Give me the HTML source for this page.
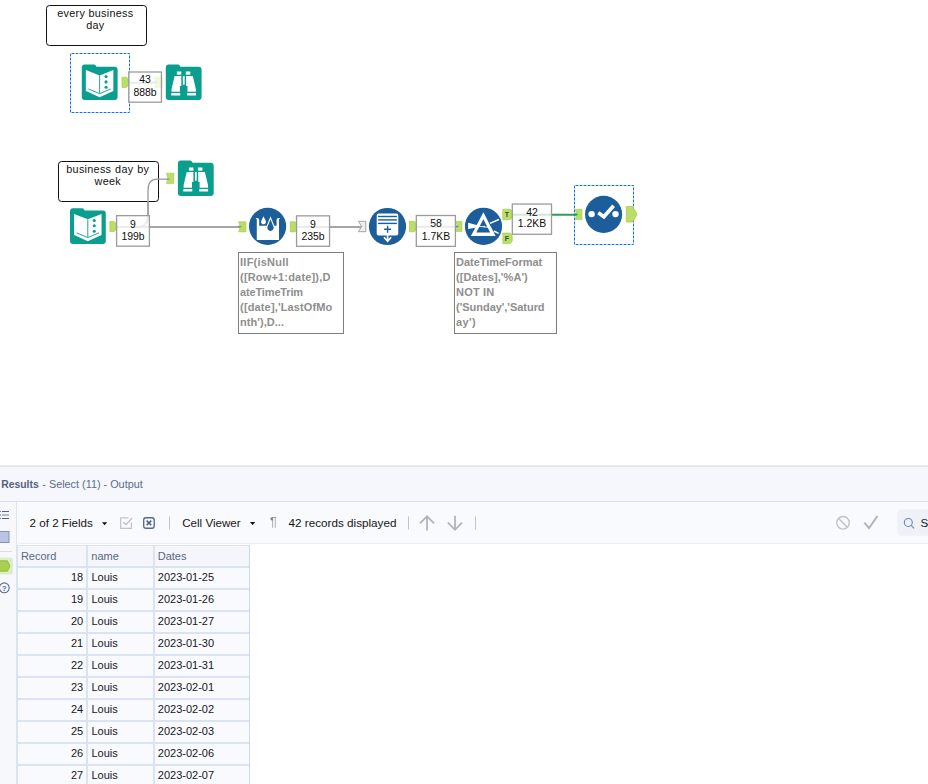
<!DOCTYPE html>
<html>
<head>
<meta charset="utf-8">
<title>Alteryx Designer</title>
<style>
html,body{margin:0;padding:0;}
body{width:928px;height:784px;overflow:hidden;background:#fff;position:relative;font-family:"Liberation Sans",sans-serif;color:#111;}
.abs{position:absolute;}
.comment{position:absolute;box-sizing:border-box;border:1px solid #111;border-radius:3.5px;background:#fff;text-align:center;font-size:10.8px;letter-spacing:0.3px;line-height:12.6px;color:#111;padding:0.9px 2.4px 0 0;white-space:nowrap;}
.lt{position:absolute;display:block;width:60px;text-align:center;font-size:11.5px;line-height:12px;color:#0d0d0d;white-space:nowrap;transform:scaleX(0.905);transform-origin:50% 50%;}
.anno{position:absolute;box-sizing:border-box;border:1px solid #7e7e7e;background:#fff;font-size:11px;line-height:15.05px;font-weight:bold;color:#8e8e8e;padding:1.5px 0 0 1.1px;white-space:nowrap;}
.anno span{display:block;}
svg{position:absolute;left:0;top:0;overflow:visible;}
#res{position:absolute;left:0;top:466px;width:928px;height:318px;background:#fff;}
#rhead{position:absolute;left:0;top:0;width:928px;height:36px;background:#f5f7fc;border-top:1px solid #dce2f0;border-bottom:1px solid #d9e0ef;box-sizing:border-box;}
#side{position:absolute;left:0;top:36px;width:16px;height:282px;background:#f6f8fc;border-right:1px solid #dfe4f0;}
#tbar{position:absolute;left:17px;top:36px;width:911px;height:41.5px;background:#f9fafd;border-bottom:1px solid #eceff5;box-sizing:border-box;border-bottom-left-radius:3px;}
.t12{position:absolute;font-size:11.6px;line-height:14px;white-space:nowrap;color:#151515;}
#grid{position:absolute;left:17px;top:79px;width:233px;height:239px;background:#f8fafd;box-sizing:border-box;}
#grid .hrow{position:absolute;left:0;top:0;width:233px;height:21px;background:#f4f6fb;}
#grid .hl{position:absolute;left:0;width:233px;height:2px;background:#dbe2f1;}
#grid .vl{position:absolute;top:0;width:2px;height:239px;background:#dbe2f1;}
#grid .vl1{position:absolute;top:0;width:1px;height:239px;background:#ccd5ea;}
#grid .th{position:absolute;top:4.3px;font-size:11px;line-height:14px;color:#5a6684;white-space:nowrap;}
#grid .td{position:absolute;font-size:11px;line-height:14px;color:#16161e;white-space:nowrap;}
</style>
</head>
<body>

<!-- ============ CANVAS ============ -->
<div class="comment" style="left:46px;top:5px;width:101px;height:41px;">every business<br>day</div>
<div class="comment" style="left:58px;top:161px;width:101px;height:41px;word-spacing:0.5px;padding-right:1.5px;">business day by<br>week</div>

<svg width="928" height="466" viewBox="0 0 928 466">
  <g fill="none" stroke="#a6a6a6" stroke-width="2">
    <path d="M128 82.8 H156"/>
    <path d="M116 227 H239.5"/>
    <path d="M137 227 Q148 227 148 216 V201.5"/>
    <path d="M148 202 V191 Q148 179.2 157 179.2 H168" stroke-width="1.3" stroke="#9a9a9a"/>
    <path d="M296 227 H361.5"/>
    <path d="M416 226.8 H457"/>
  </g>
  <path d="M512 214.8 H577" stroke="#2f9e50" stroke-width="2" fill="none"/>
  <g fill="none" stroke="#0f73e3" stroke-width="1" stroke-dasharray="2.8 1.2" stroke-dashoffset="-1.05">
    <rect x="70.5" y="53.5" width="59" height="59"/>
    <rect x="574.5" y="185.5" width="59" height="59"/>
  </g>
</svg>

<svg width="928" height="466" viewBox="0 0 928 466" id="tools">
  <path transform="translate(81.8,64.4)" fill="#0a9e8f" d="M0 3 Q0 0 3 0 H12.2 Q13.8 0 14.6 2.3 H32.8 Q35.8 2.3 35.8 5.3 V32.7 Q35.8 35.7 32.8 35.7 H3 Q0 35.7 0 32.7 Z"/><g transform="translate(81.8,64.4)"><path fill="#fff" d="M4.06 5.6 L17.8 11 L31.55 5.6 V26.7 L17.8 32.9 L4.06 26.7 Z"/><path fill="none" stroke="#0a9e8f" stroke-width="0.9" d="M17.8 11 V29 M6.6 24.5 L17.8 29.3 L29 24.5"/><circle cx="24.26" cy="12.15" r="1.55" fill="#0a9e8f"/><circle cx="24.26" cy="17.5" r="1.55" fill="#0a9e8f"/><circle cx="24.26" cy="22.9" r="1.55" fill="#0a9e8f"/></g>
  <path fill="#bbde64" stroke="#a3cd4e" stroke-width="0.7" stroke-linejoin="round" d="M122.0 77.2 H126.4 Q127.80000000000001 77.8 128.4 80.0 V84.60000000000001 Q127.80000000000001 86.80000000000001 126.4 87.4 H122.0 Z"/>
  <path fill="#bbde64" stroke="#a3cd4e" stroke-width="0.6" d="M154.6 77.2 H161.79999999999998 V87.4 H154.6 L156.29999999999998 82.3 Z"/><path fill="#8e8e8e" d="M154.1 81.3 H156.0 L158.0 82.3 L156.0 83.3 H154.1 Z"/>
  <path transform="translate(165.8,64.4)" fill="#0a9e8f" d="M0 3 Q0 0 3 0 H12.2 Q13.8 0 14.6 2.3 H32.8 Q35.8 2.3 35.8 5.3 V32.7 Q35.8 35.7 32.8 35.7 H3 Q0 35.7 0 32.7 Z"/><g transform="translate(165.8,64.4)" fill="#fff"><rect x="11.05" y="7.1" width="4.45" height="3.2"/><rect x="20.0" y="7.1" width="4.5" height="3.2"/><path d="M8.8 11.6 H15.5 V21.7 H14.1 V27.3 H5.7 V24.8 Z"/><path d="M27.0 11.6 H20.3 V21.7 H21.7 V27.3 H30.1 V24.8 Z"/><rect x="17.05" y="11.6" width="1.8" height="8.7"/><rect x="5.4" y="28.7" width="9" height="2.4"/><rect x="21.3" y="28.7" width="8.9" height="2.4"/></g>
  <path transform="translate(177.9,160.4)" fill="#0a9e8f" d="M0 3 Q0 0 3 0 H12.2 Q13.8 0 14.6 2.3 H32.8 Q35.8 2.3 35.8 5.3 V32.7 Q35.8 35.7 32.8 35.7 H3 Q0 35.7 0 32.7 Z"/><g transform="translate(177.9,160.4)" fill="#fff"><rect x="11.05" y="7.1" width="4.45" height="3.2"/><rect x="20.0" y="7.1" width="4.5" height="3.2"/><path d="M8.8 11.6 H15.5 V21.7 H14.1 V27.3 H5.7 V24.8 Z"/><path d="M27.0 11.6 H20.3 V21.7 H21.7 V27.3 H30.1 V24.8 Z"/><rect x="17.05" y="11.6" width="1.8" height="8.7"/><rect x="5.4" y="28.7" width="9" height="2.4"/><rect x="21.3" y="28.7" width="8.9" height="2.4"/></g>
  <path fill="#bbde64" stroke="#a3cd4e" stroke-width="0.6" d="M166.4 173.2 H173.8 V183.6 H166.4 L168.1 178.39999999999998 Z"/>
  <path fill="#8e8e8e" d="M167 178.5 H168 L170 179.2 L168 179.9 H167 Z"/>
  <path transform="translate(70,208.3)" fill="#0a9e8f" d="M0 3 Q0 0 3 0 H12.2 Q13.8 0 14.6 2.3 H32.8 Q35.8 2.3 35.8 5.3 V32.7 Q35.8 35.7 32.8 35.7 H3 Q0 35.7 0 32.7 Z"/><g transform="translate(70,208.3)"><path fill="#fff" d="M4.06 5.6 L17.8 11 L31.55 5.6 V26.7 L17.8 32.9 L4.06 26.7 Z"/><path fill="none" stroke="#0a9e8f" stroke-width="0.9" d="M17.8 11 V29 M6.6 24.5 L17.8 29.3 L29 24.5"/><circle cx="24.26" cy="12.15" r="1.55" fill="#0a9e8f"/><circle cx="24.26" cy="17.5" r="1.55" fill="#0a9e8f"/><circle cx="24.26" cy="22.9" r="1.55" fill="#0a9e8f"/></g>
  <path fill="#bbde64" stroke="#a3cd4e" stroke-width="0.7" stroke-linejoin="round" d="M109.9 221.5 H114.10000000000001 Q115.50000000000001 222.1 116.10000000000001 224.3 V228.7 Q115.50000000000001 230.9 114.10000000000001 231.5 H109.9 Z"/>
  <path fill="#bbde64" stroke="#a3cd4e" stroke-width="0.6" d="M238.6 221.7 H246.0 V231.89999999999998 H238.6 L240.29999999999998 226.79999999999998 Z"/><path fill="#8e8e8e" d="M238.1 225.79999999999998 H240.0 L242.0 226.79999999999998 L240.0 227.79999999999998 H238.1 Z"/>
  <circle cx="267.6" cy="226.4" r="18.6" fill="#1b5e9b"/>
  <path fill="#fff" d="M255.6 217.9 L258 218.3 Q259.2 218.6 259.2 220 V225.7 H276.6 V220 Q276.6 218.6 277.8 218.3 L280.2 217.9 L279 219.6 V239.9 H256.8 V219.6 Z"/>
  <path fill="#fff" d="M263.5 216.2 L265.6 220.4 A2.5 2.5 0 1 1 261.4 220.4 Z"/>
  <path fill="#1b5e9b" stroke="#fff" stroke-width="1.1" d="M270.5 217.7 L273.9 226.2 A3.75 3.75 0 1 1 267.1 226.2 Z"/>
  <path fill="#bbde64" stroke="#a3cd4e" stroke-width="0.7" stroke-linejoin="round" d="M290.3 221.7 H294.7 Q296.09999999999997 222.29999999999998 296.7 224.5 V229.09999999999997 Q296.09999999999997 231.29999999999998 294.7 231.89999999999998 H290.3 Z"/>
  <path fill="#efefef" stroke="#9a9a9a" stroke-width="0.9" d="M358.4 221.3 H365.79999999999995 V231.70000000000002 H358.4 L361.7 226.5 Z"/>
  <circle cx="387.5" cy="226.5" r="18.6" fill="#1b5e9b"/>
  <rect x="376.7" y="213.5" width="21.6" height="21.9" rx="2" fill="#fff"/>
  <rect x="378.1" y="215.8" width="18.8" height="1.4" fill="#1b5e9b"/>
  <rect x="378.1" y="219.20000000000002" width="18.8" height="1.4" fill="#1b5e9b"/>
  <rect x="378.1" y="222.70000000000002" width="18.8" height="1.4" fill="#1b5e9b"/>
  <path stroke="#1b5e9b" stroke-width="1.4" fill="none" d="M384.1 229.3 H391.1 M387.6 225.8 V232.8"/>
  <path stroke="#fff" stroke-width="1.7" fill="none" d="M387.6 235 V241 M384 237.3 L387.6 241.3 L391.2 237.3"/>
  <path fill="#bbde64" stroke="#a3cd4e" stroke-width="0.7" stroke-linejoin="round" d="M409.5 221.3 H414.3 Q415.7 221.9 416.3 224.10000000000002 V228.9 Q415.7 231.10000000000002 414.3 231.70000000000002 H409.5 Z"/>
  <path fill="#bbde64" stroke="#a3cd4e" stroke-width="0.6" d="M455.8 221.4 H462.0 V231.4 H455.8 L457.5 226.4 Z"/><path fill="#8e8e8e" d="M455.3 225.4 H457.2 L459.2 226.4 L457.2 227.4 H455.3 Z"/>
  <circle cx="483.5" cy="226.3" r="18.6" fill="#1b5e9b"/>
  <path fill="#fff" d="M483.4 212.3 L470.9 236.1 H495.6 Z"/>
  <path fill="#1b5e9b" d="M483.4 219.2 L476.3 232.5 H490.2 Z"/>
  <path fill="#fff" d="M468.1 222.8 L479.5 225.7 L479.5 226.9 L468.1 228.9 Z"/>
  <path stroke="#fff" stroke-width="0.9" fill="none" d="M478 226.2 L488.3 227.3"/><circle cx="484.1" cy="226.6" r="0.8" fill="#fff"/>
  <path stroke="#fff" stroke-width="1.5" fill="none" d="M489.9 223.4 L498.9 219.5 M493.8 231 L498.6 233.4"/>
  <path fill="#bbde64" stroke="#a3cd4e" stroke-width="0.7" stroke-linejoin="round" d="M502.8 209.2 H510.20000000000005 Q511.6 209.79999999999998 512.2 212.0 V216.89999999999998 Q511.6 219.1 510.20000000000005 219.7 H502.8 Z"/><text x="507.0" y="217.0" font-family="Liberation Sans, sans-serif" font-weight="bold" font-size="7px" fill="#3b4a36" text-anchor="middle">T</text>
  <path fill="#bbde64" stroke="#a3cd4e" stroke-width="0.7" stroke-linejoin="round" d="M502.8 233.1 H510.20000000000005 Q511.6 233.7 512.2 235.9 V240.79999999999998 Q511.6 243.0 510.20000000000005 243.6 H502.8 Z"/><text x="507.0" y="240.9" font-family="Liberation Sans, sans-serif" font-weight="bold" font-size="7px" fill="#3b4a36" text-anchor="middle">F</text>
  <path fill="#bbde64" stroke="#a3cd4e" stroke-width="0.6" d="M575 209.3 H582 V219.60000000000002 H575 L576.7 214.45000000000002 Z"/><path fill="#2f9e50" d="M574.5 213.45000000000002 H576.4 L578.4 214.45000000000002 L576.4 215.45000000000002 H574.5 Z"/>
  <circle cx="603.6" cy="214.4" r="18.55" fill="#1b5e9b"/>
  <circle cx="591.6" cy="214.1" r="3.2" fill="#fff"/><circle cx="615.5" cy="214.1" r="3.2" fill="#fff"/>
  <path stroke="#fff" stroke-width="3.7" fill="none" d="M598.3 212.8 L603.9 216.8 L613.6 205.8"/>
  <path fill="#bbde64" stroke="#a3cd4e" stroke-width="0.8" d="M626.3 206.5 H632.6 L637 214.3 L632.6 222 H626.3 Z"/>
</svg>

<svg width="928" height="466" viewBox="0 0 928 466"><g fill="rgba(255,255,255,0.78)" stroke="#9b9b9b" stroke-width="1.3"><rect x="128.75" y="72.0" width="32.7" height="30.2"/><rect x="116.6" y="215.65" width="32.8" height="30.5"/><rect x="296.55" y="215.85" width="33.0" height="30.45"/><rect x="416.3" y="215.5" width="39.1" height="30.9"/><rect x="512.3" y="204.05" width="39.2" height="30.2"/></g></svg>

<span class="lt" style="left:115.10px;top:73.32px;">43</span><span class="lt" style="left:115.10px;top:85.62px;">888b</span>
<span class="lt" style="left:103.00px;top:217.82px;">9</span><span class="lt" style="left:103.00px;top:229.92px;">199b</span>
<span class="lt" style="left:283.05px;top:217.82px;">9</span><span class="lt" style="left:283.05px;top:229.92px;">235b</span>
<span class="lt" style="left:405.85px;top:217.42px;">58</span><span class="lt" style="left:405.85px;top:229.62px;">1.7KB</span>
<span class="lt" style="left:501.90px;top:205.62px;">42</span><span class="lt" style="left:501.90px;top:217.32px;">1.2KB</span>

<div class="anno" style="left:238px;top:252px;width:106.2px;height:82px;"><span style="letter-spacing:0.22px">IIF(isNull</span><span style="letter-spacing:0.17px">([Row+1:date]),D</span><span style="letter-spacing:-0.16px">ateTimeTrim</span><span style="letter-spacing:0.14px">([date],'LastOfMo</span><span style="letter-spacing:0.04px">nth'),D...</span></div>
<div class="anno" style="left:454px;top:252px;width:103.4px;height:82px;"><span style="letter-spacing:-0.04px">DateTimeFormat</span><span style="letter-spacing:0.08px">([Dates],'%A')</span><span style="letter-spacing:0.18px">NOT IN</span><span style="letter-spacing:-0.04px">('Sunday','Saturd</span><span style="letter-spacing:0.37px">ay')</span></div>

<!-- ============ RESULTS ============ -->
<div id="res">
  <div class="abs" style="left:0;top:-1px;width:928px;height:1px;background:#e8ecf5;"></div>
  <div id="rhead">
    <span class="abs" id="rt1" style="left:1.2px;top:10.6px;font-size:10.4px;line-height:14px;font-weight:bold;color:#56617c;white-space:nowrap;">Results</span>
    <span class="abs" id="rt2" style="left:42.3px;top:10px;font-size:10.85px;line-height:14px;color:#5d6b8c;white-space:nowrap;">- Select (11) - Output</span>
  </div>
  <div id="side">
    <svg width="17" height="283" viewBox="0 36 17 283">
      <g fill="#55648a">
        <rect x="2" y="45" width="7" height="1"/>
        <rect x="2" y="52" width="7" height="1"/>
        <rect x="0" y="45" width="0.8" height="1"/><rect x="0" y="48.4" width="0.8" height="1.2"/><rect x="0" y="52" width="0.8" height="1"/>
      </g>
      <rect x="2" y="48.2" width="7" height="1.6" fill="#a3aecb"/>
      <rect x="-1" y="65.5" width="10" height="11" fill="#b9c5e0" stroke="#8293bd" stroke-width="1"/>
      <rect x="0" y="85" width="12" height="1" fill="#d8dde9"/>
      <rect x="-4" y="91.5" width="17" height="17" rx="3" fill="#dcedc9"/>
      <path d="M-1 94.8 H7.4 L9.9 100 L7.4 105.2 H-1 Z" fill="#a9d14c" stroke="#86b234" stroke-width="0.8"/>
      <circle cx="4.3" cy="121.8" r="4.9" fill="none" stroke="#5a6a8c" stroke-width="1.1"/>
      <text x="4.3" y="124.8" font-family="Liberation Sans, sans-serif" font-size="8px" font-weight="bold" fill="#5a6a8c" text-anchor="middle">?</text>
    </svg>
  </div>
  <div id="tbar">
    <svg width="911" height="42" viewBox="17 502 911 42">
      <path d="M102 522.3 H107.2 L104.6 525.3 Z" fill="#111"/>
      <path d="M249.9 521.9 H255.3 L252.6 524.9 Z" fill="#111"/>
      <path d="M131.4 522.6 V528.3 H120.7 V517.9 H128.3" fill="none" stroke="#c2c2c2" stroke-width="1.2"/>
      <path d="M123.3 522.3 L126.05 524.7 L132 518.1" fill="none" stroke="#bcbcbc" stroke-width="1.3"/>
      <rect x="143.7" y="517.7" width="10.5" height="10.5" rx="2.2" fill="none" stroke="#566a90" stroke-width="1.35"/>
      <path d="M146.6 520.6 L151.3 525.3 M151.3 520.6 L146.6 525.3" stroke="#4c618c" stroke-width="1.6" fill="none"/>
      <rect x="169" y="516.3" width="1" height="13.2" fill="#c4c4c4"/>
      <rect x="408" y="516.3" width="1" height="13.2" fill="#c4c4c4"/>
      <rect x="475" y="516.3" width="1" height="13.2" fill="#c4c4c4"/>
      <g fill="#a9a9a9"><rect x="272.2" y="517.3" width="0.9" height="10.5"/><rect x="274.8" y="517.3" width="0.9" height="10.5"/><rect x="272" y="517.1" width="4.2" height="0.9" fill="#9a9a9a"/></g><path d="M272.8 517.2 H272 A1.65 1.65 0 0 0 272 520.5 H272.8 Z" fill="#808080"/>
      <g fill="none" stroke="#b4b4b4" stroke-width="1.8">
        <path d="M427 530.5 V516.5 M419.9 523.4 L427 516.3 L434.1 523.4"/>
        <path d="M455 515.8 V529.5 M447.9 522.7 L455 529.8 L462.1 522.7"/>
      </g>
      <circle cx="843" cy="522.8" r="6.3" fill="none" stroke="#c2c2c2" stroke-width="1.4"/>
      <path d="M838.6 518.4 L847.4 527.2" stroke="#c2c2c2" stroke-width="1.4"/>
      <path d="M864.3 522.6 L869 528.2 L877.4 516" fill="none" stroke="#b4b4b4" stroke-width="2"/>
      <rect x="897.4" y="509.2" width="40" height="26.5" rx="4" fill="#eef1f8"/>
      <circle cx="908.3" cy="522.4" r="4.0" fill="none" stroke="#6c80ac" stroke-width="1.05"/>
      <path d="M911.2 525.4 L914 528.3" stroke="#6c80ac" stroke-width="1.05"/>
    </svg>
    <span class="t12" id="tb1" style="left:12.6px;top:13.8px;">2 of 2 Fields</span>
    <span class="t12" id="tb2" style="left:165.2px;top:13.8px;">Cell Viewer</span>
    <span class="t12" id="tb3" style="left:271.6px;top:13.8px;font-size:11.7px;">42 records displayed</span>
    <span class="t12" id="tb4" style="left:903.6px;top:13.8px;">S</span>
  </div>
  <div id="grid">
    <div class="hrow"></div><div class="hl" style="top:0;height:1px"></div>
    <span class="th" style="left:3.9px;">Record</span><span class="th" style="left:74.3px;">name</span><span class="th" style="left:140.7px;">Dates</span>
    <div class="hl" style="top:21px"></div>
    <span class="td" style="top:24.6px;left:0;width:66.2px;text-align:right;">18</span><span class="td" style="top:24.6px;left:74.4px;">Louis</span><span class="td" style="top:24.6px;left:140.8px;">2023-01-25</span>
    <div class="hl" style="top:43px"></div>
    <span class="td" style="top:46.6px;left:0;width:66.2px;text-align:right;">19</span><span class="td" style="top:46.6px;left:74.4px;">Louis</span><span class="td" style="top:46.6px;left:140.8px;">2023-01-26</span>
    <div class="hl" style="top:65px"></div>
    <span class="td" style="top:68.6px;left:0;width:66.2px;text-align:right;">20</span><span class="td" style="top:68.6px;left:74.4px;">Louis</span><span class="td" style="top:68.6px;left:140.8px;">2023-01-27</span>
    <div class="hl" style="top:87px"></div>
    <span class="td" style="top:90.6px;left:0;width:66.2px;text-align:right;">21</span><span class="td" style="top:90.6px;left:74.4px;">Louis</span><span class="td" style="top:90.6px;left:140.8px;">2023-01-30</span>
    <div class="hl" style="top:109px"></div>
    <span class="td" style="top:112.6px;left:0;width:66.2px;text-align:right;">22</span><span class="td" style="top:112.6px;left:74.4px;">Louis</span><span class="td" style="top:112.6px;left:140.8px;">2023-01-31</span>
    <div class="hl" style="top:131px"></div>
    <span class="td" style="top:134.6px;left:0;width:66.2px;text-align:right;">23</span><span class="td" style="top:134.6px;left:74.4px;">Louis</span><span class="td" style="top:134.6px;left:140.8px;">2023-02-01</span>
    <div class="hl" style="top:153px"></div>
    <span class="td" style="top:156.6px;left:0;width:66.2px;text-align:right;">24</span><span class="td" style="top:156.6px;left:74.4px;">Louis</span><span class="td" style="top:156.6px;left:140.8px;">2023-02-02</span>
    <div class="hl" style="top:175px"></div>
    <span class="td" style="top:178.6px;left:0;width:66.2px;text-align:right;">25</span><span class="td" style="top:178.6px;left:74.4px;">Louis</span><span class="td" style="top:178.6px;left:140.8px;">2023-02-03</span>
    <div class="hl" style="top:197px"></div>
    <span class="td" style="top:200.6px;left:0;width:66.2px;text-align:right;">26</span><span class="td" style="top:200.6px;left:74.4px;">Louis</span><span class="td" style="top:200.6px;left:140.8px;">2023-02-06</span>
    <div class="hl" style="top:219px"></div>
    <span class="td" style="top:222.6px;left:0;width:66.2px;text-align:right;">27</span><span class="td" style="top:222.6px;left:74.4px;">Louis</span><span class="td" style="top:222.6px;left:140.8px;">2023-02-07</span>
    <div class="vl" style="left:-1px;"></div><div class="vl" style="left:69px;"></div><div class="vl" style="left:136px;"></div><div class="vl1" style="left:232px;"></div>
    </div>
</div>

</body>
</html>
